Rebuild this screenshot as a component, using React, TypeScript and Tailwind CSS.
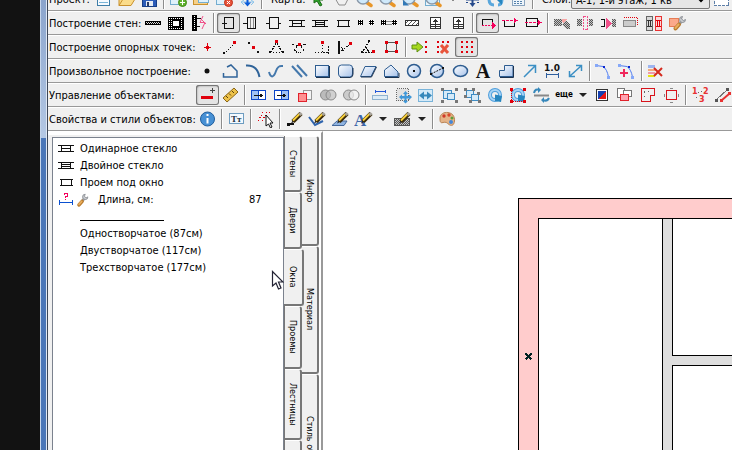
import type { ReactNode } from "react";

type Tool = {
  name: string;
  art?: ReactNode;
  text?: string;
  pressed?: boolean;
  kind?: "sep" | "arrow";
};

const SEP: Tool = { name: "sep", kind: "sep" };
const ARROW: Tool = { name: "Список", kind: "arrow" };

const RED = "#e0000c";
const PINK = "#f5005c";
const BLUE = "#3b8fc4";

/* SHARED ICON PARTS */

function Line({ d, c = "#111", w = 1, dash }: { d: string; c?: string; w?: number; dash?: string }) {
  return <path d={d} stroke={c} strokeWidth={w} strokeDasharray={dash} fill="none" />;
}

function Box({ x, y, w, h, f = "none", s }: { x: number; y: number; w: number; h: number; f?: string; s?: string }) {
  return <rect x={x} y={y} width={w} height={h} fill={f} stroke={s} />;
}

function Dots({ at, c = RED, s = 3 }: { at: number[][]; c?: string; s?: number }) {
  return (
    <>
      {at.map(([x, y]) => (
        <rect key={`${x}-${y}`} x={x} y={y} width={s} height={s} fill={c} />
      ))}
    </>
  );
}

function Smooth({ children }: { children: ReactNode }) {
  return <g shapeRendering="geometricPrecision">{children}</g>;
}

function Pencil() {
  return (
    <Smooth>
      <path d="M6 13.500 8 9.500 10 11.500z" fill="#222" />
      <path d="M8 11.500 16 3.500" stroke="#3a2a08" strokeWidth="4.500" />
      <path d="M8 10.500 14.500 4" stroke="#f7cf3c" strokeWidth="2" />
      <path d="M14.500 5 16.500 3" stroke="#a8a49c" strokeWidth="3" />
    </Smooth>
  );
}

function Wrench() {
  return (
    <Smooth>
      <path d="M11 10 14 7" stroke="#9a9a9a" strokeWidth="3" />
      <path d="M17.500 5.500a3 3 0 1 1-3-3l-1 2.500 2 1.500z" fill="#c9ccd0" stroke="#8d9096" />
      <path d="M7.500 14.500 11 10.500" stroke="#b97a2c" strokeWidth="4" strokeLinecap="round" />
      <path d="M7.500 14 10.500 10.500" stroke="#e8ad5c" strokeWidth="2" strokeLinecap="round" />
    </Smooth>
  );
}

function Magnifier() {
  return (
    <Smooth>
      <path d="M11 12 16 15.500" stroke="#e8962a" strokeWidth="3.500" strokeLinecap="round" />
      <circle cx="8" cy="8" r="6" fill="#cfe9fb" stroke="#8a98a8" strokeWidth="1.500" />
    </Smooth>
  );
}

function Rotate() {
  return (
    <Smooth>
      <circle cx="9" cy="9" r="5" fill="none" stroke="#4f9fdc" strokeWidth="4" />
      <circle cx="9" cy="9" r="5" fill="none" stroke="#a9d4f5" strokeWidth="2" />
      <path d="M9 8.500 16 10 15 16 9 15z" fill="#2786bf" />
    </Smooth>
  );
}

function WindowMark({ panes }: { panes: number }) {
  return (
    <>
      <Line d="M1 6.500H17M1 12.500H17M4.500 6V13M13.500 6V13" />
      {panes === 1 && <Line d="M5 9.500H13" />}
      {panes === 2 && <Line d="M5 8.500H13M5 10.500H13" />}
    </>
  );
}

function OpeningMark() {
  return <Line d="M3 6.500H16M3 12.500H16M4.500 6V13M14.500 6V13" />;
}

function Stairs() {
  return (
    <>
      <Box x={4.5} y={3.5} w={10} h={11} f="#fff" s="#333" />
      <Line d="M5 10.500H14M5 12.500H14M9.500 5V14M7 7.500H12M8 6.500H11" c="#333" />
    </>
  );
}

/* TOOLS */

const projectTools: Tool[] = [
  { name: "Новый", art: <><Box x={3.5} y={1.5} w={12} h={14} f="#f7fbff" s="#3f7ea8" /><Line d="M5 12.500H14" c="#7cb6d8" /></> },
  { name: "Открыть", art: <Smooth><path d="M2 15.500V3h5l2 2h7v4M2 15.500 6 9h12l-4 6.500z" fill="#fbdc8a" stroke="#c9912e" /></Smooth> },
  { name: "Сохранить", art: <><Box x={2.5} y={2.5} w={14} h={14} f="#2c5cb8" s="#173e86" /><Box x={6} y={11} w={7} h={5} f="#e6ecf4" /><Box x={7} y={12} w={2} h={4} f="#2c3c66" /></> },
  SEP,
  { name: "Добавить карту", art: <><Box x={1.5} y={3.5} w={14} h={11} f="#dff1fb" s="#74add0" /><Smooth><circle cx="13.500" cy="12.500" r="4" fill="#62b32e" stroke="#3d8a14" /></Smooth><Line d="M11 12.500H16M13.500 10V15" c="#fff" w={1} /></> },
  { name: "Открыть карту", art: <><Box x={1.5} y={4.5} w={14} h={10} f="#f6d089" s="#c9912e" /><Box x={6.5} y={3.5} w={10} h={9} f="#dff1fb" s="#74add0" /></> },
  { name: "Удалить карту", art: <><Box x={1.5} y={3.5} w={14} h={11} f="#dff1fb" s="#74add0" /><Smooth><circle cx="13.500" cy="12.500" r="4" fill="#e8553c" stroke="#c03018" /></Smooth><Line d="M12 11 15 14M15 11 12 14" c="#fff" /></> },
  { name: "Центр", art: <Smooth><path d="M4 12h11M6 10l-3 2 3 3M13 10l3 2-3 3" stroke="#8dc4ea" fill="none" /><path d="M9.500 8V14" stroke="#0a5bd8" strokeWidth="2" /><path d="M6 12.500h7l-3.500 4z" fill="#0a5bd8" /></Smooth> },
  SEP,
];

const mapTools: Tool[] = [
  { name: "Выбор", art: <Smooth><path d="M5 2v11l3-2 3 5 2-1-3-5h4z" fill="#2fa32a" stroke="#1b6c17" /></Smooth> },
  { name: "Рука", art: <Smooth><path d="M3 8l4 7h6l3-6V3H5z" fill="#f1f1f1" stroke="#8d8d8d" /></Smooth> },
  { name: "Увеличить", art: <Magnifier /> },
  { name: "Уменьшить", art: <Magnifier /> },
  { name: "Показать всё", art: <><Magnifier /><Smooth><path d="M2 15.500V10l6 5.500z" fill="#3179b8" /></Smooth></> },
  { name: "Показать область", art: <><Box x={1.5} y={2.5} w={14} h={13} s="#74add0" f="#eaf5fc" /><Magnifier /></> },
  ARROW,
  { name: "Сдвиг", art: <Smooth><path d="M9.500 3v12M3 9.500h13" stroke="#264a8c" strokeWidth="2" /><path d="M6.500 13h6l-3 4z" fill="#264a8c" /><path d="M3 12.500h2M14 12.500h2" stroke="#264a8c" /></Smooth> },
  { name: "Обновить", art: <Smooth><path d="M3 9c0 4 2 6 5 6M16 9c0 3-1 6-4 6" stroke="#5aa7dc" strokeWidth="3" fill="none" /><path d="M11 10h5v5z" fill="#2786bf" /></Smooth> },
  { name: "Таблица", art: <><Box x={3.5} y={3.5} w={12} h={12} f="#eef5fb" s="#8aa4be" /><Line d="M5 11.500H14M5 13.500H14" c="#5580aa" dash="2 1" /></> },
  SEP,
];

const wallTools: Tool[] = [
  { name: "Стена", art: <><Box x={1} y={7} w={16} h={4} f="#000" /><Line d="M2 8.500H16M3 9.500H16" c="#ddd" dash="1 1" /></> },
  { name: "Комната", art: <><Box x={1.5} y={3.5} w={15} h={12} f="url(#dense)" s="#000" /><Box x={5.5} y={6.5} w={7} h={6} f="#fff" s="#000" /></> },
  { name: "Разрыв стены", art: <><Box x={2.5} y={1.5} w={4} h={15} f="url(#dense)" s="#000" /><Line d="M7 4.500H11M7 12.500H10" /><Smooth><Line d="M13 2 10 8.500H15L12 15M11 5 16 10" c="#f0508a" /></Smooth></> },
  SEP,
  { name: "Дверь", pressed: true, art: <><Box x={5.5} y={3.5} w={9} h={11} s="#111" /><Line d="M3 9.500H8" /></> },
  { name: "Двойная дверь", art: <><Box x={5.5} y={3.5} w={8} h={11} s="#111" /><Line d="M1 9.500H6" /><Line d="M8.500 4V14M11.500 4V14" c="#888" /></> },
  { name: "Проем", art: <><Box x={4.5} y={3.5} w={9} h={11} s="#111" /><Line d="M1 9.500H5M13 9.500H16" /></> },
  { name: "Окно", art: <WindowMark panes={1} /> },
  { name: "Двойное окно", art: <WindowMark panes={2} /> },
  { name: "Проем под окно", art: <OpeningMark /> },
  { name: "Узкий проем", art: <><Box x={1} y={6} w={5} h={5} f="url(#dense)" /><Box x={12} y={6} w={5} h={5} f="url(#dense)" /></> },
  { name: "Перегородка", art: <><Box x={5} y={7.5} w={8} h={3} s="#888" /><Box x={1} y={6} w={5} h={5} f="url(#dense)" /><Box x={12} y={6} w={5} h={5} f="url(#dense)" /></> },
  { name: "Штриховка", art: <Box x={2.5} y={6.5} w={13} h={5} f="url(#hatch)" s="#333" /> },
  { name: "Лестница вверх", art: <Stairs /> },
  { name: "Лестница вниз", art: <Stairs /> },
  SEP,
  { name: "Выступ", pressed: true, art: <><Line d="M4.500 12V5.500H14.500V9" /><Line d="M4 11.500H14" c={PINK} dash="2 1" /><path d="M14 8v7l4-3.500z" fill={PINK} /></> },
  { name: "Выступ вверх", art: <><Line d="M3.500 6V12.500H13.500V7" /><Line d="M1 6.500H14" c={PINK} dash="3 1" /><path d="M13 4v5l4-2.500z" fill={PINK} /></> },
  { name: "Сквозной", art: <><Box x={2.5} y={4.5} w={11} h={8} s="#111" /><Line d="M1 8.500H16" c={PINK} dash="3 1" /><path d="M14 6v5l4-2.500z" fill={PINK} /></> },
  SEP,
  { name: "Соединить углом", art: <><Box x={1} y={5} w={8} h={7} f="url(#gray)" /><path d="M9 5h5l-4 6z" fill="#f7a5a5" /><path d="M13 6l4 5v4h-3l-5-4z" fill="url(#gray)" /></> },
  { name: "Разделить", art: <><Box x={1} y={5} w={5} h={7} f="url(#gray)" /><Box x={13} y={5} w={4} h={7} f="url(#gray)" /><rect x="7.500" y="2.500" width="4" height="13" fill="none" stroke="#f0508a" strokeDasharray="2 1" /></> },
  { name: "Дотянуть", art: <><Line d="M2 5.500H5.500V12.500H2" /><path d="M7 4v11l6-5.500z" fill="#f0508a" /><Box x={13} y={5} w={4} h={8} f="url(#gray)" /></> },
  { name: "Контур", art: <><Box x={1.5} y={6.5} w={12} h={6} f="#ccc" s="#888" /><Line d="M2 3.500H15.500V12" c={RED} dash="1 1" /></> },
  { name: "Копия стены", art: <><Box x={1.5} y={2.5} w={6} h={14} s="#666" f="#d8d8d8" /><Box x={10.5} y={2.5} w={6} h={14} s="#e83232" f="#fbd8d8" /><Line d="M2 6.500H7M2 12.500H7M3.500 6V13M5.500 6V13" c="#333" /><Line d="M11 6.500H16M11 12.500H16M12.500 6V13M14.500 6V13" c={RED} /></> },
  { name: "Настройка стен", art: <><Box x={1.5} y={4.5} w={9} h={8} f="#fba98a" s="#e57c56" /><Wrench /></> },
];

const pointTools: Tool[] = [
  { name: "Точка", art: <><Line d="M9.500 5V13M6 9.500H13" c={RED} /><Box x={8} y={8} w={3} h={3} f={RED} /></> },
  { name: "На линии", art: <><Line d="M3 16 13 6" dash="1 2" w={1} /><Box x={2} y={14} w={2} h={2} f="#111" /><Dots at={[[12, 3]]} /></> },
  { name: "Середина", art: <><Dots at={[[4, 4], [13, 13]]} c="#111" s={2} /><Dots at={[[8, 8]]} /></> },
  { name: "Угол", art: <><Line d="M9 5 4 14M10 5 15 14" dash="2 1" w={1} /><Line d="M3 14.500H17" dash="1 2" /><Dots at={[[2, 13], [15, 13]]} c="#111" s={2} /><Dots at={[[8, 2]]} /></> },
  { name: "Дуга", art: <><Line d="M2 6 9 8 16 6M7 8 3 15M11 8 15 15" dash="2 2" /><Line d="M5 12C7 16 11 16 14 12" dash="1 1" /><Dots at={[[8, 5]]} /></> },
  { name: "Перпендикуляр", art: <><Line d="M2 14.500H11M9.500 7V14" dash="1 2" /><Line d="M15.500 8V16M10 14.500H16" dash="2 1" /><Dots at={[[8, 3]]} /></> },
  { name: "Угол от линии", art: <><Line d="M3 3V16" w={2} /><Line d="M3 15 14 6" dash="2 1" /><Line d="M3 8C6 9 8 12 8 14" dash="1 1" /><Dots at={[[13, 4]]} /></> },
  { name: "Расстояние", art: <><Line d="M10 3 3 15M3 14 14 14" dash="2 1" w={1} /><Line d="M6 8 10 14" w={1} /><Dots at={[[2, 13], [9, 2]]} c="#111" s={2} /><Dots at={[[13, 12]]} /></> },
  { name: "Прямоугольник", art: <><Box x={4.5} y={4.5} w={10} h={9} s="#555" /><Dots at={[[3, 3], [13, 3], [3, 12], [13, 12]]} /></> },
  SEP,
  { name: "Перенести точки", art: <><Smooth><path d="M1 7h5V4l6 5-6 5v-3H1z" fill="#a5d81e" stroke="#5f9010" /></Smooth><Dots at={[[14, 3], [14, 8], [14, 13]]} s={2} /></> },
  { name: "Удалить точки", art: <><Dots at={[[3, 3], [8, 3], [13, 3], [3, 8], [3, 13]]} s={2} /><Smooth><Line d="M7 7 14 15M14 7 7 15" c="#e8553c" w={3} /></Smooth></> },
  { name: "Сетка точек", pressed: true, art: <Dots at={[[4, 3], [9, 3], [14, 3], [4, 8], [9, 8], [14, 8], [4, 13], [9, 13], [14, 13]]} s={2} /> },
];

const shape = { fill: "url(#glass)", stroke: "#2d5c90", strokeWidth: 1 };
const shade = { fill: "none", stroke: "#1c3350", strokeWidth: 1 };

const freeTools: Tool[] = [
  { name: "Точка", art: <Smooth><circle cx="9" cy="9" r="2.500" fill="#111" /></Smooth> },
  { name: "Полилиния", art: <Smooth><Line d="M2.500 11V15H16V9L10 3 6 5" c="#2f6399" w={1.5} /></Smooth> },
  { name: "Дуга", art: <Smooth><Line d="M2 3.500C9 3 14 7 15.500 15" c="#2f6399" w={2} /></Smooth> },
  { name: "Кривая", art: <Smooth><Line d="M2 10C4 17 7 15 9 9S14 4 16 4" c="#4478ac" w={2} /></Smooth> },
  { name: "Параллельные", art: <Smooth><Line d="M2 4 12 15M7 3 17 14" c="#4478ac" w={2} /></Smooth> },
  { name: "Прямоугольник", art: <><rect x="2.500" y="3.500" width="13" height="11" {...shape} /><path d="M3 15.500H16.500V4" {...shade} /></> },
  { name: "Скругленный", art: <Smooth><rect x="2.500" y="3" width="14" height="12" rx="3" {...shape} /><path d="M4 15.500H14.500Q17 15 17 12V6" {...shade} /></Smooth> },
  { name: "Параллелограмм", art: <Smooth><path d="M6 4.500H17L12 14.500H1.500z" {...shape} /><path d="M2 15H12.500L17.500 5" {...shade} /></Smooth> },
  { name: "Многоугольник", art: <Smooth><path d="M2.500 14.500V8L9 3 16 10V14.500z" {...shape} /><path d="M3 15.500H17V11" {...shade} /></Smooth> },
  { name: "Окружность", art: <Smooth><circle cx="9" cy="9" r="6.500" {...shape} strokeWidth={1.5} /><Dots at={[[8, 8]]} c="#111" s={2} /></Smooth> },
  { name: "По диаметру", art: <Smooth><circle cx="9" cy="9" r="6.500" {...shape} strokeWidth={1.5} /><Line d="M3 12 15 6" dash="2 1" /><Dots at={[[2, 11], [14, 5]]} c="#111" s={2} /></Smooth> },
  { name: "Эллипс", art: <Smooth><ellipse cx="9.500" cy="9" rx="7" ry="5.500" {...shape} strokeWidth={1.5} /></Smooth> },
  { name: "Текст", art: <text x="9" y="16" textAnchor="middle" fontSize="20" fontWeight="700" fontFamily="Liberation Serif, serif" fill="#111">A</text> },
  { name: "Контур", art: <Smooth><path d="M2.500 14.500V8.500H7.500V3.500H16V14.500z" {...shape} /><path d="M3 15.500H16.500V4" {...shade} /></Smooth> },
  { name: "Стрелка", art: <Smooth><Line d="M4 15 15 4M8 3.500H15.500V11" c={BLUE} w={1.5} /></Smooth> },
  { name: "Размер", art: <><text x="9" y="9" textAnchor="middle" fontSize="9" fontWeight="700" fontFamily="DejaVu Sans, sans-serif" fill="#111">1.0</text><Line d="M3 12.500H16M3.500 11V16M15.500 11V16" c="#2f5f9f" /></> },
  { name: "Двойная стрелка", art: <Smooth><Line d="M4 14 15 4M10 3.500H15.500V9M3.500 9V14.500H9" c={BLUE} w={1.5} /></Smooth> },
  SEP,
  { name: "Правка узлов", art: <><Smooth><Line d="M1 3.500 8 4.500Q12 7 13.500 15" c="#4f7cf0" /></Smooth><Dots at={[[0, 2], [12, 14]]} c="#86a8f8" /><Dots at={[[8, 4]]} c="#0a25d0" s={2} /></> },
  { name: "Добавить узел", art: <><Smooth><Line d="M1 3.500 9 4.500Q13 7 14.500 15" c="#4f7cf0" /></Smooth><Dots at={[[0, 2], [13, 14]]} c="#86a8f8" /><Dots at={[[10, 4]]} c="#0a25d0" s={2} /><Line d="M6 7V15M2 11H10" c="#f0285c" w={2} /></> },
  SEP,
  { name: "Очистить стиль", art: <><Box x={1} y={3} w={7} h={3} f="#9db5f0" /><Box x={1} y={7} w={7} h={2} f="#f4a77c" /><Box x={1} y={10} w={7} h={2} f="#f09aa8" /><Box x={1} y={13} w={7} h={2} f="#e6e010" /><Smooth><Line d="M7 6 15 14M15 6 7 14" c="#d42a1e" w={2} /></Smooth></> },
];

const objectTools: Tool[] = [
  { name: "Вычесть", pressed: true, art: <><Box x={3} y={10} w={12} h={3} f={RED} /><Line d="M14.500 2V7M12 4.500H17" c="#444" /></> },
  { name: "Линейка", art: <Smooth><path d="M2 12 13 2 17 6 6 16z" fill="#edc24a" stroke="#8a6616" /><Line d="M5 10 7 12M8 7.500 10 9.500M11 5 13 7" c="#5a430c" /></Smooth> },
  SEP,
  { name: "Переместить из", art: <><Box x={1.5} y={4.5} w={7} h={9} f="#9fc1f5" s="#0b45c8" /><Box x={8.5} y={4.5} w={7} h={9} f="#fff" s="#0b45c8" /><Line d="M4 9.500H13M10.500 8V11M11.500 8V11" /></> },
  { name: "Переместить в", art: <><Box x={1.5} y={4.5} w={7} h={9} f="#fff" s="#0b45c8" /><Box x={8.5} y={4.5} w={7} h={9} f="#9fc1f5" s="#0b45c8" /><Line d="M4 9.500H13M10.500 8V11M11.500 8V11" /></> },
  { name: "На передний план", art: <><Box x={7.5} y={4.5} w={8} h={9} f="#f4f4f4" s="#999" /><Box x={2.5} y={7.5} w={8} h={8} f="#ff9292" s="#e0222c" /></> },
  { name: "Объединить", art: <Smooth><circle cx="6.500" cy="9" r="5" fill="#bbb" stroke="#8a8a8a" /><circle cx="12" cy="9" r="5" fill="#bbb" fillOpacity=".6" stroke="#8a8a8a" /></Smooth> },
  { name: "Пересечение", art: <Smooth><circle cx="6.500" cy="9" r="5" fill="#ccc" stroke="#8a8a8a" /><circle cx="12" cy="9" r="5" fill="#f2f2f2" fillOpacity=".7" stroke="#8a8a8a" /></Smooth> },
  SEP,
  { name: "Ширина", art: <><Line d="M4 5.500H15M4.500 4V7M14.500 4V7" c="#2358d8" /><Box x={1.5} y={9.5} w={15} h={4} f="#dcebf6" s="#8fb2cf" /></> },
  { name: "Переместить", art: <><rect x="2.500" y="2.500" width="12" height="12" fill="#e2e2e2" stroke="#666" strokeDasharray="1 1" /><Smooth><path d="M11.500 5 14 8h-1.500v2H15V8.500L18 11l-3 3v-1.500h-2.500V15H14l-2.500 2.500L9 15h1.500v-2.500H8V14l-3-3 3-2.500V10h2.500V8H9z" fill="#3f97d8" /></Smooth></> },
  { name: "Отразить", art: <><Box x={1.5} y={3.5} w={14} h={12} f="#d5eaf8" s="#79b4da" /><Smooth><path d="M2 9.500 7 5.500v3h3v-3l5 4-5 4v-3H7v3z" fill="#3788bb" /></Smooth></> },
  { name: "Группа", art: <><Box x={3.5} y={4.5} w={8} h={8} f="#d5eaf8" s="#3d8cc4" /><Box x={7.5} y={7.5} w={7} h={6} f="#d5eaf8" s="#3d8cc4" /><Dots at={[[1, 2], [15, 2], [1, 14], [15, 14]]} c="#777" /></> },
  { name: "Разгруппировать", art: <><Box x={3.5} y={4.5} w={7} h={7} f="#d5eaf8" s="#3d8cc4" /><Box x={8.5} y={8.5} w={7} h={6} f="#d5eaf8" s="#3d8cc4" /><Dots at={[[1, 2], [9, 2], [1, 9], [14, 6], [6, 14], [15, 14]]} c="#777" /></> },
  { name: "Повернуть", art: <Rotate /> },
  { name: "Повернуть рамку", art: <><Rotate /><Line d="M2.500 3V15.500H16" c={RED} dash="1 1" /><Dots at={[[1, 2], [14, 2], [1, 14], [14, 14]]} /></> },
  { name: "Повернуть линию", art: <Smooth><Line d="M2 9.500H17" c="#888" w={2} /><Line d="M2 7Q3 2 8 4M17 12Q15 16 11 14" c="#3788bb" w={2} /><path d="M6 1v6l3-3zM12 11v6l-3-3z" fill="#3788bb" /></Smooth> },
  { name: "еще", text: "еще" },
  ARROW,
  { name: "Заливка", art: <><Box x={3.5} y={3.5} w={11} h={11} f="#fff" s="#333" /><path d="M5 5h8L5 13z" fill="#1740b0" /><path d="M13 5v8H5z" fill="#e81818" /></> },
  { name: "Порядок", art: <><Box x={1.5} y={2.5} w={7} h={9} f="#fff" s="#777" /><Box x={7.5} y={4.5} w={8} h={6} f="#fff" s="#777" /><Box x={4.5} y={8.5} w={8} h={6} f="#ffa3b0" s="#e0222c" /></> },
  { name: "Вырез", art: <><Line d="M2.500 2.500H15.500V9.500H11.500V15.500H2.500z" c="#d8141c" /><Line d="M5 5.500H13M5.500 6V13" c="#666" dash="1 3" /></> },
  { name: "Рамка", art: <><Box x={4.5} y={4.5} w={10} h={9} s="#d8141c" /><Line d="M8 2.500H11M8 16.500H11M2.500 8V11M16.500 8V11" c="#888" /></> },
  SEP,
  { name: "Нумерация", art: <><g fill="#e83232" fontSize="8" fontWeight="700" fontFamily="DejaVu Sans, sans-serif"><text x="1" y="8">1</text><text x="12" y="8">2</text><text x="8" y="16">3</text></g><Dots at={[[7, 6], [10, 5], [5, 11]]} c="#666" s={1} /></> },
  { name: "Связь", art: <><Line d="M2 14 14 3" c="#777" /><Smooth><Line d="M8 14 15 8" c="#e83232" w={2} /></Smooth><Dots at={[[1, 13], [12, 2]]} c="#555" /><Dots at={[[6, 13], [14, 6]]} c="#e83232" /></> },
];

const styleTools: Tool[] = [
  { name: "Инфо", art: <Smooth><circle cx="9.500" cy="9" r="7" fill="#4790d4" stroke="#1f5d9c" /><path d="M9.500 4V6M9.500 8V13.500" stroke="#fff" strokeWidth="2" /></Smooth> },
  SEP,
  { name: "Шрифт", art: <><Box x={2.5} y={3.5} w={14} h={10} f="#f3f9fe" s="#6d9cc0" /><text x="4" y="12" fontSize="9" fontWeight="700" fontFamily="Liberation Serif, serif" fill="#234">Tт</text></> },
  SEP,
  { name: "Выбор по стилю", art: <><Line d="M7 2 1 13M11 2 5 13M14 2 10 8" c={RED} dash="1 2" /><Smooth><path d="M10 5v11l2.500-2 2 4 1.500-1-2-4h3z" fill="#fff" stroke="#111" /></Smooth></> },
  SEP,
  { name: "Карандаш", art: <><Pencil /><Line d="M3 14H9" w={2} /><Dots at={[[2, 13]]} c="#111" /></> },
  { name: "Стиль линии", art: <><Smooth><Line d="M1 7 7 15 15 11" c="#2e63ad" w={2} /></Smooth><Pencil /></> },
  { name: "Стиль заливки", art: <><Smooth><path d="M1 15.500 6 11H16L13 15.500z" fill="#8fb3e0" stroke="#44699c" /></Smooth><Pencil /></> },
  { name: "Стиль текста", art: <><text x="0" y="16" fontSize="17" fontWeight="700" fontFamily="Liberation Serif, serif" fill="#3d66a8">A</text><g transform="translate(1 0)"><Pencil /></g></> },
  ARROW,
  { name: "Стиль штриховки", art: <><Box x={1.5} y={8.5} w={15} h={7} f="url(#gray)" s="#555" /><Pencil /></> },
  ARROW,
  SEP,
  { name: "Палитра", art: <Smooth><path d="M2 8C2 4 6 2 10 2.500S17 6 16.500 11 13 16 11 14.500 8 11.500 5 12.500 2 11 2 8z" fill="#e5b488" stroke="#b98354" /><circle cx="6" cy="6" r="1.700" fill="#cf3a2a" /><circle cx="11" cy="5" r="1.700" fill="#d9482d" /><circle cx="14" cy="8" r="1.500" fill="#5b9e3c" /><circle cx="13" cy="12" r="2" fill="#4688d8" /></Smooth> },
];

/* TOOLBARS */

function ToolButton({ tool }: { tool: Tool }) {
  if (tool.kind === "sep") {
    return (
      <span className="flex h-5 w-1.5 shrink-0 justify-center">
        <span className="w-0.5 border-l border-[#8c8c8c] bg-white" />
      </span>
    );
  }
  if (tool.kind === "arrow") {
    return (
      <button type="button" aria-label={tool.name} className="flex h-5 w-4 shrink-0 items-center justify-center">
        <span className="border-x-4 border-t-4 border-x-transparent border-t-[#222]" />
      </button>
    );
  }
  if (tool.text) {
    return (
      <button type="button" className="h-5 w-[22px] shrink-0 text-center text-[8px] leading-4 font-bold">
        {tool.text}
      </button>
    );
  }
  return (
    <button
      type="button"
      aria-label={tool.name}
      aria-pressed={tool.pressed}
      className={
        tool.pressed
          ? "flex h-5 w-[23px] shrink-0 items-center justify-center rounded-[3px] bg-[#e4e4e4] shadow-[inset_0_0_0_1px_#777,inset_1px_1px_2px_#888]"
          : "flex h-5 w-[23px] shrink-0 items-center justify-center"
      }
    >
      <svg width="19" height="18" viewBox="0 0 19 18" fill="none" shapeRendering="crispEdges">
        {tool.art}
      </svg>
    </button>
  );
}

function ToolList({ tools }: { tools: Tool[] }) {
  return (
    <>
      {tools.map((tool, i) => (
        <ToolButton key={i} tool={tool} />
      ))}
    </>
  );
}

function Toolbar({ children }: { children: ReactNode }) {
  return (
    <div
      role="toolbar"
      className="flex h-6 items-center overflow-hidden border-t border-b border-t-white border-b-[#999] bg-[#f0f0f0] pl-px whitespace-nowrap"
    >
      {children}
    </div>
  );
}

/* SIDE PANEL */

function ListRow({ icon, children }: { icon?: ReactNode; children: ReactNode }) {
  return (
    <li className="flex h-[17px] items-center pl-1">
      <span className="w-[23px] shrink-0">
        {icon && (
          <svg width="19" height="17" viewBox="0 1 19 17" fill="none" shapeRendering="crispEdges">
            {icon}
          </svg>
        )}
      </span>
      {children}
    </li>
  );
}

function SideTab({ label, size, selected }: { label: string; size: string; selected?: boolean }) {
  return (
    <button
      type="button"
      role="tab"
      aria-selected={!!selected}
      className={`flex shrink-0 items-center justify-center overflow-hidden rounded-r-[3px] border-t border-r-2 border-b-2 border-t-white border-r-[#777] border-b-[#777] bg-[#f0f0f0] text-[9px] [writing-mode:vertical-rl] ${size} ${
        selected ? "z-10 -mr-0.5 -ml-px" : ""
      }`}
    >
      {label}
    </button>
  );
}

/* FLOOR PLAN */

function FloorPlan() {
  return (
    <svg className="size-full" shapeRendering="crispEdges">
      <rect x="195.500" y="67.500" width="2000" height="2000" fill="#ffcccc" stroke="#000" />
      <rect x="215.500" y="87.500" width="2000" height="2000" fill="#fff" stroke="#000" />
      <rect x="339.500" y="87.500" width="10" height="2000" fill="#dedede" stroke="#000" />
      <rect x="349.500" y="224.500" width="2000" height="10" fill="#dedede" stroke="#000" />
      <path d="M349.500 225V234" stroke="#dedede" />
      <path d="M202.500 222.500l6 6M208.500 222.500l-6 6" stroke="#022" strokeWidth="2" />
    </svg>
  );
}

export default function App() {
  return (
    <div className="flex h-screen overflow-hidden bg-[#f0f0f0] font-['DejaVu_Sans_Condensed','Noto_Sans',sans-serif] text-[11px] leading-4 text-black">
      <svg className="absolute size-0">
        <defs>
          <pattern id="dense" width="2" height="2" patternUnits="userSpaceOnUse">
            <rect width="2" height="2" fill="#000" />
            <path d="M0 0h1v1H0z" fill="#fff" />
          </pattern>
          <pattern id="gray" width="2" height="2" patternUnits="userSpaceOnUse">
            <rect width="2" height="2" fill="#c4c4c4" />
            <path d="M0 0h1v1H0zM1 1h1v1H1z" fill="#555" />
          </pattern>
          <pattern id="hatch" width="4" height="4" patternUnits="userSpaceOnUse">
            <rect width="4" height="4" fill="#fff" />
            <path d="M0 4 4 0" stroke="#555" />
          </pattern>
          <linearGradient id="glass" x1="0" y1="0" x2="1" y2="1">
            <stop offset="0" stopColor="#fff" />
            <stop offset="1" stopColor="#a6c2ea" />
          </linearGradient>
        </defs>
      </svg>

      {/* DESKTOP EDGE AND WINDOW FRAME */}
      <div className="w-10 shrink-0 bg-[#121212]" />
      <div className="flex w-2 shrink-0 flex-col border-r border-l border-r-[#3c4658] border-l-[#c4d4ea]">
        <div className="h-[138px] border-r border-[#dfe8f4] bg-linear-to-b from-[#8aa4cc] to-[#b4c8e4]" />
        <div className="flex-1 border-r border-[#dfe8f4] bg-[#4a76b8]" />
      </div>

      <div className="flex min-w-0 flex-1 flex-col">
        {/* TOOLBARS */}
        <header className="-mt-[13px] shrink-0">
          <Toolbar>
            <span className="w-[43px] shrink-0 pt-0.5">Проект:</span>
            <ToolList tools={projectTools} />
            <span className="w-[42px] shrink-0 pt-0.5 pl-1.5">Карта:</span>
            <ToolList tools={mapTools} />
            <label htmlFor="layer" className="w-[35px] shrink-0 pt-0.5 pl-1.5">
              Слои:
            </label>
            <select
              id="layer"
              className="h-5 w-[139px] shrink-0 rounded-[2px] border border-[#777] bg-[#e6e6e6] pt-0.5 text-[11px]"
            >
              <option>A-1, 1-й этаж, 1 кв</option>
            </select>
            <ToolButton tool={{ name: "Рамка слоя", art: <rect x="2.500" y="5.500" width="14" height="10" fill="#fff" stroke="#5d7fa8" strokeDasharray="3 1" /> }} />
          </Toolbar>
          <Toolbar>
            <span className="w-[93px] shrink-0 pt-0.5">Построение стен:</span>
            <ToolList tools={wallTools} />
          </Toolbar>
          <Toolbar>
            <span className="w-[147px] shrink-0 pt-0.5">Построение опорных точек:</span>
            <ToolList tools={pointTools} />
          </Toolbar>
          <Toolbar>
            <span className="w-[147px] shrink-0 pt-0.5">Произвольное построение:</span>
            <ToolList tools={freeTools} />
          </Toolbar>
          <Toolbar>
            <span className="w-[147px] shrink-0 pt-0.5">Управление объектами:</span>
            <ToolList tools={objectTools} />
          </Toolbar>
          <Toolbar>
            <span className="w-[147px] shrink-0 pt-0.5">Свойства и стили объектов:</span>
            <ToolList tools={styleTools} />
          </Toolbar>
        </header>

        <div className="flex min-h-0 flex-1">
          {/* SIDE PANEL */}
          <aside className="flex w-[275px] shrink-0 border-t-2 border-r-2 border-t-white border-r-[#999] bg-white">
            <div className="relative mt-0.5 w-[236px] shrink-0 border-t-2 border-l-4 border-[#f0f0f0]">
              <ul className="h-full border border-b-0 border-[#7b828e] bg-white pt-0.5">
                <ListRow icon={<WindowMark panes={1} />}>Одинарное стекло</ListRow>
                <ListRow icon={<WindowMark panes={2} />}>Двойное стекло</ListRow>
                <ListRow icon={<OpeningMark />}>Проем под окно</ListRow>
                <ListRow
                  icon={
                    <>
                      <Line d="M2 12.500H16M2.500 10V15M15.500 10V15" c="#0a50d0" />
                      <Line d="M7.500 5V3.500H10.500V6.500H8.500V8M8.500 9V10" c={PINK} />
                    </>
                  }
                >
                  <svg width="18" height="16" viewBox="4 0 16 18" className="-ml-1.5">
                    <Wrench />
                  </svg>
                  <label htmlFor="length" className="w-[157px] shrink-0 pl-1.5">
                    Длина, см:
                  </label>
                  <input id="length" defaultValue="87" className="h-4 w-6 min-w-0 bg-transparent p-0 outline-none" />
                </ListRow>
                <ListRow>
                  <span className="h-2 w-[84px] border-b border-black" />
                </ListRow>
                <ListRow>Одностворчатое (87см)</ListRow>
                <ListRow>Двустворчатое (117см)</ListRow>
                <ListRow>Трехстворчатое (177см)</ListRow>
              </ul>
              <svg className="absolute top-[133px] right-0" width="13" height="21" viewBox="0 0 13 21">
                <path
                  d="M1.500 1.500V16L5 13 7.500 19 10 18 7.500 12H12z"
                  fill="#fff"
                  stroke="#223"
                  strokeWidth="1.200"
                />
              </svg>
            </div>

            {/* VERTICAL TABS */}
            <div role="tablist" className="mt-[3px] flex w-[18px] shrink-0 flex-col border-l border-[#777]">
              <SideTab label="Стены" size="h-[56px]" />
              <SideTab label="Двери" size="h-[57px]" />
              <SideTab label="Окна" size="h-[57px]" selected />
              <SideTab label="Проемы" size="h-[63px]" />
              <SideTab label="Лестницы" size="h-[71px]" />
              <SideTab label="" size="h-[71px]" />
            </div>
            <div role="tablist" className="mt-[3px] flex w-[17px] shrink-0 flex-col">
              <SideTab label="Инфо" size="h-[110px]" />
              <SideTab label="Материал" size="h-[128px]" />
              <SideTab label="Стиль объектов" size="h-[154px]" />
            </div>
          </aside>

          {/* CANVAS */}
          <main className="min-w-0 flex-1 bg-white">
            <FloorPlan />
          </main>
        </div>
      </div>
    </div>
  );
}
